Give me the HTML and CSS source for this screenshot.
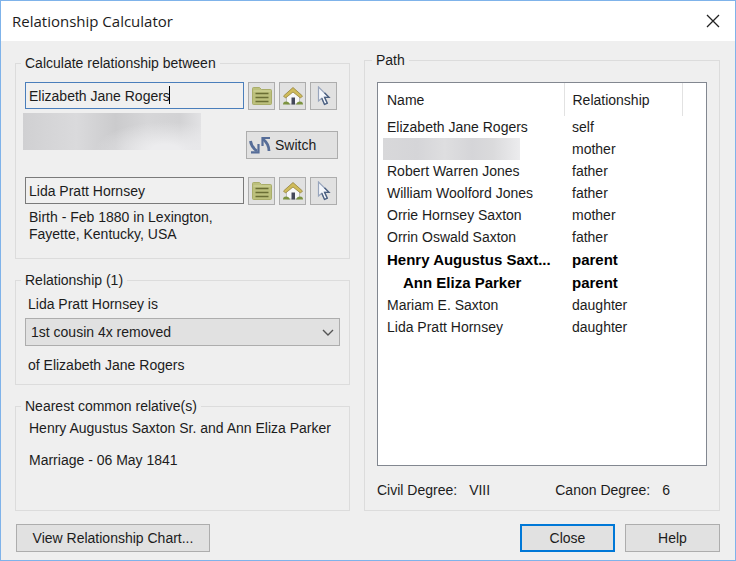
FILE: index.html
```html
<!DOCTYPE html>
<html lang="en">
<head>
<meta charset="utf-8">
<title>Relationship Calculator</title>
<link rel="stylesheet" href="styles.css">
</head>
<body>
<svg class="symbols" aria-hidden="true">
  <symbol id="icon-list" viewBox="0 0 20 18">
    <path d="M0.5 1.500Q.5 .5 1.500 .5H7.500L9.500 2.500H18.500Q19.500 2.500 19.500 3.500V16.500Q19.500 17.500 18.500 17.500H1.500Q.5 17.500 .5 16.500Z" fill="#bcc07c" stroke="#a9ad69"/>
    <path d="M1.500 4H18.500" stroke="#d3d79b"/>
    <path d="M3.500 6.500H16.500M3.500 10.500H16.500M3.500 14.500H16.500" stroke="#6a6e34" stroke-width="1.500"/>
  </symbol>
  <symbol id="icon-home" viewBox="0 0 20 18">
    <path d="M3.500 9L10 3L16.500 9V17H3.500Z" fill="#f7f7f8" stroke="#b3b3b3" stroke-width=".8"/>
    <path d="M8.500 10.500H12V17.500H8.500Z" fill="#44485a"/>
    <path d="M0 17.500Q0 14.500 3 14.500Q6 14.500 7 17.500Z" fill="#7c9340"/>
    <path d="M13 17.500Q14 14.500 17 14.500Q20 14.500 20 17.500Z" fill="#7c9340"/>
    <path d="M.5 9L10 .5L19.500 9L17.500 11L10 5L2.500 11Z" fill="#cfbb5a" stroke="#94833c" stroke-width=".8"/>
  </symbol>
  <symbol id="icon-pointer" viewBox="0 0 14 20">
    <path d="M1.500 1V15L4.800 12.300L7.500 18.500L10.300 17.200L7.600 11.300H12Z" fill="#f4f7fc" stroke="#98a5bc" stroke-width="1.200"/>
    <path d="M4.800 12.300L7.500 18.500L10.300 17.200L7.600 11.300H12L7.500 6.800" fill="none" stroke="#4c6080" stroke-width="1.300"/>
  </symbol>
  <symbol id="icon-swap" viewBox="0 0 22 18">
    <g fill="none" stroke="#566d98">
      <path d="M1.500 5Q2 10.500 8 15" stroke-width="2.800"/>
      <path d="M9.500 8V16.300H2" stroke-width="2.200"/>
      <path d="M20 15Q20 8 14 3" stroke-width="2.800"/>
      <path d="M13.500 10V2H21" stroke-width="2.200"/>
    </g>
  </symbol>
</svg>

<div class="dialog" role="dialog" aria-labelledby="dialog-title">
  <header class="titlebar">
    <h1 id="dialog-title">Relationship Calculator</h1>
    <button class="dismiss" type="button" aria-label="Close window">
      <svg viewBox="0 0 14 14"><path d="M1 1L13 13M13 1L1 13"/></svg>
    </button>
  </header>

  <main class="content">
    <div class="column">
      <fieldset class="group people">
        <legend>Calculate relationship between</legend>
        <div class="person">
          <div class="field focused">
            <input type="text" aria-label="First person" value="Elizabeth Jane Rogers">
            <span class="caret"></span>
          </div>
          <button class="tool" type="button" aria-label="Select from list"><svg class="wide"><use href="#icon-list"/></svg></button>
          <button class="tool" type="button" aria-label="Home person"><svg class="wide"><use href="#icon-home"/></svg></button>
          <button class="tool" type="button" aria-label="Current person"><svg class="tall"><use href="#icon-pointer"/></svg></button>
        </div>
        <div class="between">
          <div class="masked"></div>
          <button class="button switch" type="button"><svg><use href="#icon-swap"/></svg>Switch</button>
        </div>
        <div class="person">
          <div class="field">
            <input type="text" aria-label="Second person" value="Lida Pratt Hornsey">
          </div>
          <button class="tool" type="button" aria-label="Select from list"><svg class="wide"><use href="#icon-list"/></svg></button>
          <button class="tool" type="button" aria-label="Home person"><svg class="wide"><use href="#icon-home"/></svg></button>
          <button class="tool" type="button" aria-label="Current person"><svg class="tall"><use href="#icon-pointer"/></svg></button>
        </div>
        <p class="details">Birth - Feb 1880 in Lexington,<br>Fayette, Kentucky, USA</p>
      </fieldset>

      <fieldset class="group relation">
        <legend>Relationship (1)</legend>
        <label for="relation">Lida Pratt Hornsey is</label>
        <div class="dropdown">
          <select id="relation"><option>1st cousin 4x removed</option></select>
          <svg viewBox="0 0 12 8"><path d="M1 1L6 6L11 1"/></svg>
        </div>
        <p>of Elizabeth Jane Rogers</p>
      </fieldset>

      <fieldset class="group common">
        <legend>Nearest common relative(s)</legend>
        <p>Henry Augustus Saxton Sr. and Ann Eliza Parker</p>
        <p>Marriage - 06 May 1841</p>
      </fieldset>
    </div>

    <fieldset class="group path">
      <legend>Path</legend>
      <div class="listbox">
        <table>
          <colgroup><col class="col-name"><col class="col-relation"><col></colgroup>
          <thead><tr><th scope="col">Name</th><th scope="col">Relationship</th><td></td></tr></thead>
          <tbody>
            <tr><td>Elizabeth Jane Rogers</td><td>self</td></tr>
            <tr><td class="hidden-name"><div class="masked"></div></td><td>mother</td></tr>
            <tr><td>Robert Warren Jones</td><td>father</td></tr>
            <tr><td>William Woolford Jones</td><td>father</td></tr>
            <tr><td>Orrie Hornsey Saxton</td><td>mother</td></tr>
            <tr><td>Orrin Oswald Saxton</td><td>father</td></tr>
            <tr class="shared"><td>Henry Augustus Saxt...</td><td>parent</td></tr>
            <tr class="shared"><td class="spouse">Ann Eliza Parker</td><td>parent</td></tr>
            <tr><td>Mariam E. Saxton</td><td>daughter</td></tr>
            <tr><td>Lida Pratt Hornsey</td><td>daughter</td></tr>
          </tbody>
        </table>
      </div>
      <dl class="degrees">
        <div><dt>Civil Degree:</dt><dd>VIII</dd></div>
        <div><dt>Canon Degree:</dt><dd>6</dd></div>
      </dl>
    </fieldset>
  </main>

  <footer class="actions">
    <button class="button chart" type="button">View Relationship Chart...</button>
    <button class="button default" type="button">Close</button>
    <button class="button" type="button">Help</button>
  </footer>
</div>
</body>
</html>
```

FILE: styles.css
```css
* { box-sizing: border-box; }

body {
  margin: 0;
  font: 14px/18px "Liberation Sans", Arial, sans-serif;
  color: #1c1c1c;
}

p, h1, dl, dd { margin: 0; }
button, input, select { font: inherit; color: inherit; }
.symbols { display: none; }

.dialog {
  display: flex;
  flex-direction: column;
  min-height: 100vh;
  border: 1px solid #7fb3ea;
  background: #efefef;
}

/* Title bar */
.titlebar {
  display: flex;
  align-items: center;
  justify-content: space-between;
  height: 40px;
  padding: 0 8px 0 11px;
  background: #fff;
}
.titlebar h1 { font: 15px/20px "Open Sans", "Noto Sans", sans-serif; }
.dismiss {
  display: grid;
  place-items: center;
  width: 28px;
  height: 28px;
  padding: 0;
  border: 0;
  background: none;
}
.dismiss svg { width: 14px; height: 14px; fill: none; stroke: #222; stroke-width: 1.3; }

/* Groups */
.content {
  flex: 1;
  display: grid;
  grid-template-columns: 335fr 356fr;
  gap: 14px;
  padding: 10px 15px 0 14px;
}
.column { display: flex; flex-direction: column; gap: 12px; padding-top: 3px; }
.group {
  min-width: 0;
  margin: 0;
  padding: 0 9px;
  border: 1px solid #dcdcdc;
}
.group legend { margin-left: -4px; padding: 0 4px; }

.people { padding: 10px 12px 15px 9px; }
.person { display: flex; gap: 4px; }
.field { position: relative; flex: 1; }
.field input {
  display: block;
  width: 100%;
  height: 27px;
  padding: 0 3px;
  border: 1px solid #7a7a7a;
  border-radius: 0;
  background: #f0f0f0;
  outline: none;
}
.field.focused input { border-color: #4a7ebb; }
.caret {
  position: absolute;
  top: 4px;
  left: 144px;
  width: 1px;
  height: 18px;
  background: #000;
}
.tool {
  display: grid;
  place-items: center;
  width: 27px;
  height: 28px;
  padding: 0;
  border: 1px solid #adadad;
  background: #e1e1e1;
}
.tool .wide { width: 20px; height: 18px; }
.tool .tall { width: 14px; height: 20px; }

.between {
  display: flex;
  justify-content: space-between;
  align-items: flex-start;
  padding: 3px 0 18px;
}
.masked {
  width: 178px;
  height: 37px;
  margin-left: -2px;
  background:
    radial-gradient(ellipse 70px 28px at 80% 100%, #ececee 20%, transparent),
    linear-gradient(90deg, #d0d0d2, #dadadc 30%, #cbcbcd 52%, #d6d6d8 70%, #d2d2d4 88%, #e2e2e4);
}
.details { padding: 4px 4px 0; line-height: 17px; }

.button {
  min-width: 95px;
  height: 28px;
  padding: 0 8px;
  border: 1px solid #adadad;
  background: #e1e1e1;
}
.switch {
  display: flex;
  align-items: center;
  gap: 4px;
  min-width: 92px;
  margin: 18px -1px 0 0;
  padding: 0 2px;
}
.switch svg { width: 22px; height: 18px; }

.relation { padding: 6px 9px 10px; }
.relation label, .relation p { display: block; padding-left: 3px; }
.dropdown { position: relative; margin: 5px 0 10px; }
.dropdown select {
  display: block;
  appearance: none;
  width: 100%;
  height: 28px;
  padding: 0 24px 0 5px;
  border: 1px solid #adadad;
  border-radius: 0;
  background: #e1e1e1;
}
.dropdown svg {
  position: absolute;
  top: 11px;
  right: 6px;
  width: 12px;
  height: 8px;
  fill: none;
  stroke: #555;
  stroke-width: 1.4;
  pointer-events: none;
}

.common { flex: 1; padding: 4px 4px 10px 13px; }
.common legend { margin-left: -8px; }
.common p + p { margin-top: 14px; }

/* Relationship path */
.path {
  display: flex;
  flex-direction: column;
  padding: 13px 12px 11px;
}
.path legend { margin-left: -5px; }
.listbox {
  flex: 1;
  border: 1px solid #828790;
  background: #fff;
}
table { width: 100%; table-layout: fixed; border-collapse: collapse; }
.col-name { width: 186px; }
.col-relation { width: 118px; }
th, td {
  height: 22px;
  padding: 0 4px 0 9px;
  font-weight: normal;
  text-align: left;
  white-space: nowrap;
}
td + td, th + th { padding-left: 8px; }
thead th { height: 33px; border-right: 1px solid #e2e2e2; }
.shared td { height: 23px; font-size: 15px; font-weight: bold; color: #000; }
td.spouse { padding-left: 25px; }
td.hidden-name { padding: 0 0 0 7px; }
.hidden-name .masked {
  width: 137px;
  height: 22px;
  background: linear-gradient(90deg, #d8d8da, #d5d5d8 25%, #dedee0 45%, #d5d5d8 65%, #dadadc 80%, #ececee);
}

.degrees { display: flex; justify-content: space-between; padding-top: 15px; }
.degrees div { display: flex; }
.degrees dd { margin-left: 12px; }
.degrees div + div { padding-right: 37px; }

/* Footer */
.actions { display: flex; gap: 10px; padding: 13px 15px 8px; }
.chart { min-width: 194px; margin-right: auto; }
.button.default { border: 2px solid #0078d7; }
```
